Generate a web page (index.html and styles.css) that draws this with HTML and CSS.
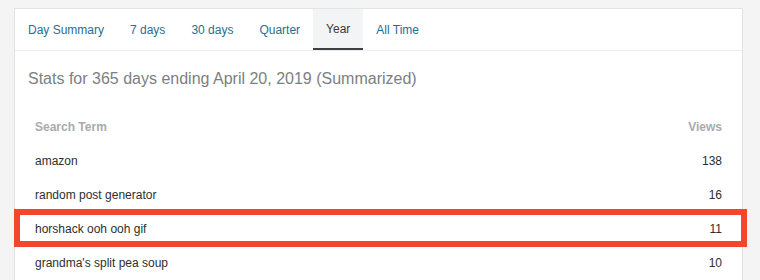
FILE: index.html
```html
<!DOCTYPE html>
<html lang="en">
<head>
    <meta charset="UTF-8">
    <title>Stats - Search Terms</title>
    <link rel="stylesheet" href="styles.css">
</head>
<body>
    <div class="card">
        <ul class="tabs">
            <li><a href="#">Day Summary</a></li>
            <li><a href="#">7 days</a></li>
            <li><a href="#">30 days</a></li>
            <li><a href="#">Quarter</a></li>
            <li class="selected"><a href="#">Year</a></li>
            <li><a href="#">All Time</a></li>
        </ul>

        <h2 class="period">Stats for 365 days ending April 20, 2019 (Summarized)</h2>

        <div class="terms">
            <div class="row head">
                <span>Search Term</span>
                <span>Views</span>
            </div>
            <div class="row">
                <span>amazon</span>
                <span>138</span>
            </div>
            <div class="row">
                <span>random post generator</span>
                <span>16</span>
            </div>
            <div class="row marked">
                <span>horshack ooh ooh gif</span>
                <span>11</span>
            </div>
            <div class="row">
                <span>grandma's split pea soup</span>
                <span>10</span>
            </div>
        </div>
    </div>
</body>
</html>
```

FILE: styles.css
```css
html {
    overflow: hidden;
}
body {
    font-family: "Liberation Sans", Arial, sans-serif;
    margin: 0;
    padding: 8px 17px 0 14px;
    background: #f4f4f4;
    color: #2e2e2e;
}
.card {
    background: white;
    border: 1px solid #e2e3e4;
    border-bottom: none;
    height: 272px;
}
.tabs {
    list-style: none;
    margin: 0;
    padding: 0;
    display: flex;
    border-bottom: 1px solid #ebeced;
}
.tabs li a {
    display: block;
    padding: 2px 13px 0;
    line-height: 39px;
    font-size: 12px;
    color: #2a6d91;
    text-decoration: none;
}
.tabs li.selected a {
    background: #f2f4f6;
    color: #3a3a3a;
    line-height: 37px;
    border-bottom: 2px solid #3d4145;
}
.period {
    margin: 0;
    padding: 18px 13px 0;
    font-size: 16px;
    font-weight: normal;
    color: #7b7f83;
    line-height: 20px;
}
.terms {
    padding: 21px 20px 0;
}
.row {
    display: flex;
    justify-content: space-between;
    height: 34px;
    line-height: 34px;
    font-size: 12px;
    position: relative;
}
.row.head {
    font-weight: bold;
    color: #a8abae;
}
.row.marked::after {
    content: "";
    position: absolute;
    left: -21px;
    right: -25px;
    top: -3px;
    bottom: -1px;
    border: 6px solid #f3462c;
}
```
